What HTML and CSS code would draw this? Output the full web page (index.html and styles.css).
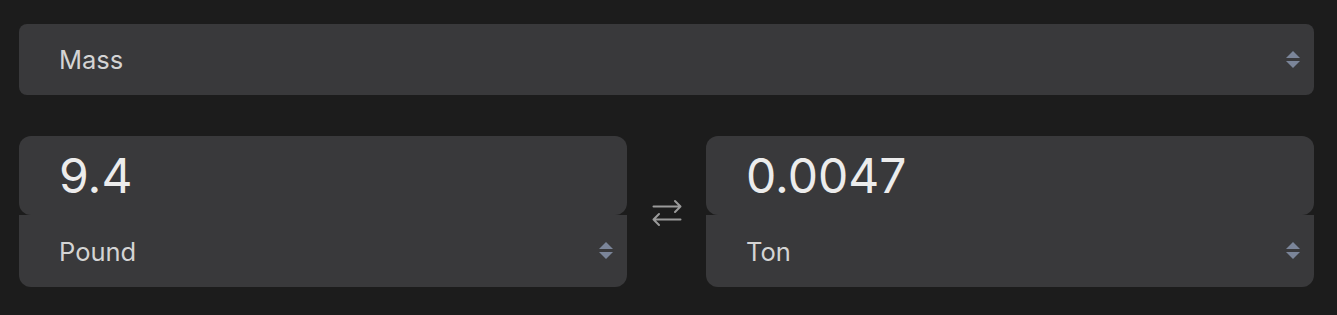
FILE: index.html
```html
<!DOCTYPE html>
<html>
<head>
<meta charset="utf-8">
<link rel="stylesheet" href="styles.css">
</head>
<body>
<div class="app">
  <div class="select select-top">
    <span class="label">Mass</span>
    <svg class="chev" width="16" height="20" viewBox="0 0 16 20"><path d="M8 1 L15 8 L1 8 Z" fill="#7b8599"/><path d="M1 11 L15 11 L8 18 Z" fill="#7b8599"/></svg>
  </div>
  <div class="row">
    <div class="panel">
      <div class="value">9.4</div>
      <div class="select select-unit">
        <span class="label">Pound</span>
        <svg class="chev" width="16" height="20" viewBox="0 0 16 20"><path d="M8 1 L15 8 L1 8 Z" fill="#7b8599"/><path d="M1 11 L15 11 L8 18 Z" fill="#7b8599"/></svg>
      </div>
    </div>
    <div class="swap">
      <svg width="30" height="30" viewBox="0 0 30 30" fill="none" stroke="#9a9a9a" stroke-width="2" stroke-linecap="round" stroke-linejoin="round"><path d="M1.5 9.5 H28.5 M23 4 L28.5 9.5 L23 15"/><path d="M28.5 22.5 H1.5 M7 17 L1.5 22.5 L7 28"/></svg>
    </div>
    <div class="panel">
      <div class="value">0.0047</div>
      <div class="select select-unit">
        <span class="label">Ton</span>
        <svg class="chev" width="16" height="20" viewBox="0 0 16 20"><path d="M8 1 L15 8 L1 8 Z" fill="#7b8599"/><path d="M1 11 L15 11 L8 18 Z" fill="#7b8599"/></svg>
      </div>
    </div>
  </div>
</div>
</body>
</html>
```
FILE: styles.css
```css
* { box-sizing: border-box; }
html, body { margin: 0; background: #1c1c1c; }
body { font-family: Inter, "Noto Sans", sans-serif; color: #d9d9d9; }
.app { padding: 24px 23px 0 19px; display: flex; flex-direction: column; gap: 41px; }
.select {
  background: #39393b;
  height: 72px;
  display: flex;
  align-items: center;
  justify-content: space-between;
  padding: 0 13px 0 40px;
}
.select-top { height: 71px; border-radius: 8px; }
.label { font-size: 25.5px; color: #d4d4d4; }
.chev { display: block; }
.row { display: flex; align-items: stretch; }
.panel { flex: 1; display: flex; flex-direction: column; }
.value {
  background: #39393b;
  height: 79px;
  border-radius: 12px;
  padding: 12px 0 0 40px;
  font-size: 48px;
  line-height: 56px;
  color: #ececec;
}
.select-unit { border-radius: 0 0 12px 12px; }
.swap { width: 79px; display: flex; align-items: center; justify-content: center; }
.swap svg { display: block; }
```
